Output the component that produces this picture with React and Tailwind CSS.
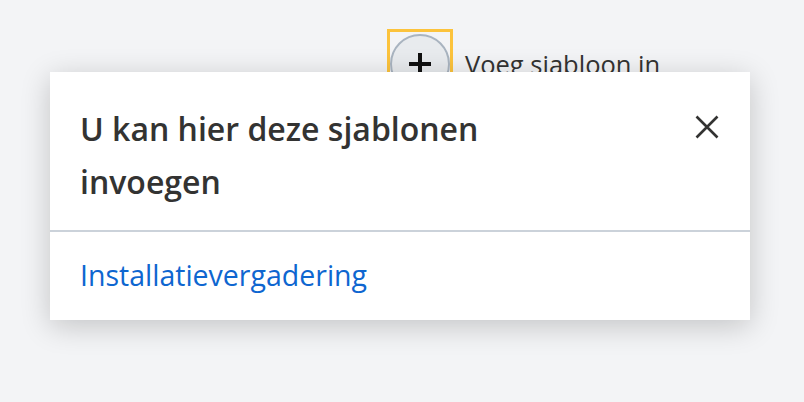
export default function App() {
  return (
    <div className="relative h-[402px] w-[804px] overflow-hidden bg-[#f3f4f6]" style={{ fontFamily: '"Open Sans", "Noto Sans", sans-serif' }}>
      <div className="flex items-start pl-[387px] pt-[29px]">
        <div className="box-border flex h-[72px] w-[66px] justify-center border-[3px] border-[#fcc33c] pt-[2px]">
          <div className="flex h-[60px] w-[60px] shrink-0 items-center justify-center rounded-full border-2 border-[#a9b4c0] bg-[#e8ebee]">
            <svg width="22" height="22" viewBox="0 0 22 22">
              <path d="M11 0v22M0 11h22" stroke="#111" strokeWidth="4" />
            </svg>
          </div>
        </div>
        <span className="ml-3 mt-[17px] text-[25.5px] leading-[36px] text-[#333332]">Voeg sjabloon in</span>
      </div>
      <div className="absolute left-[50px] top-[72px] w-[700px] bg-white shadow-[0_6px_28px_rgba(0,0,0,0.2)]">
        <div className="relative pl-[30px] pr-[80px] pt-[30px] pb-[22px]">
          <h2 className="text-[32px] font-semibold leading-[53px] text-[#333332]">
            U kan hier deze sjablonen<br />invoegen
          </h2>
          <svg className="absolute right-[31px] top-[43px]" width="24" height="24" viewBox="0 0 24 24">
            <path d="M1.5 1.5L22.5 22.5M22.5 1.5L1.5 22.5" stroke="#333332" strokeWidth="2.6" />
          </svg>
        </div>
        <div className="h-[2px] bg-[#cbd2da]" />
        <div className="px-[30px] pt-[23px] pb-[25px]">
          <a className="block text-[28.5px] leading-[40px] text-[#0e66d0]">Installatievergadering</a>
        </div>
      </div>
    </div>
  );
}
